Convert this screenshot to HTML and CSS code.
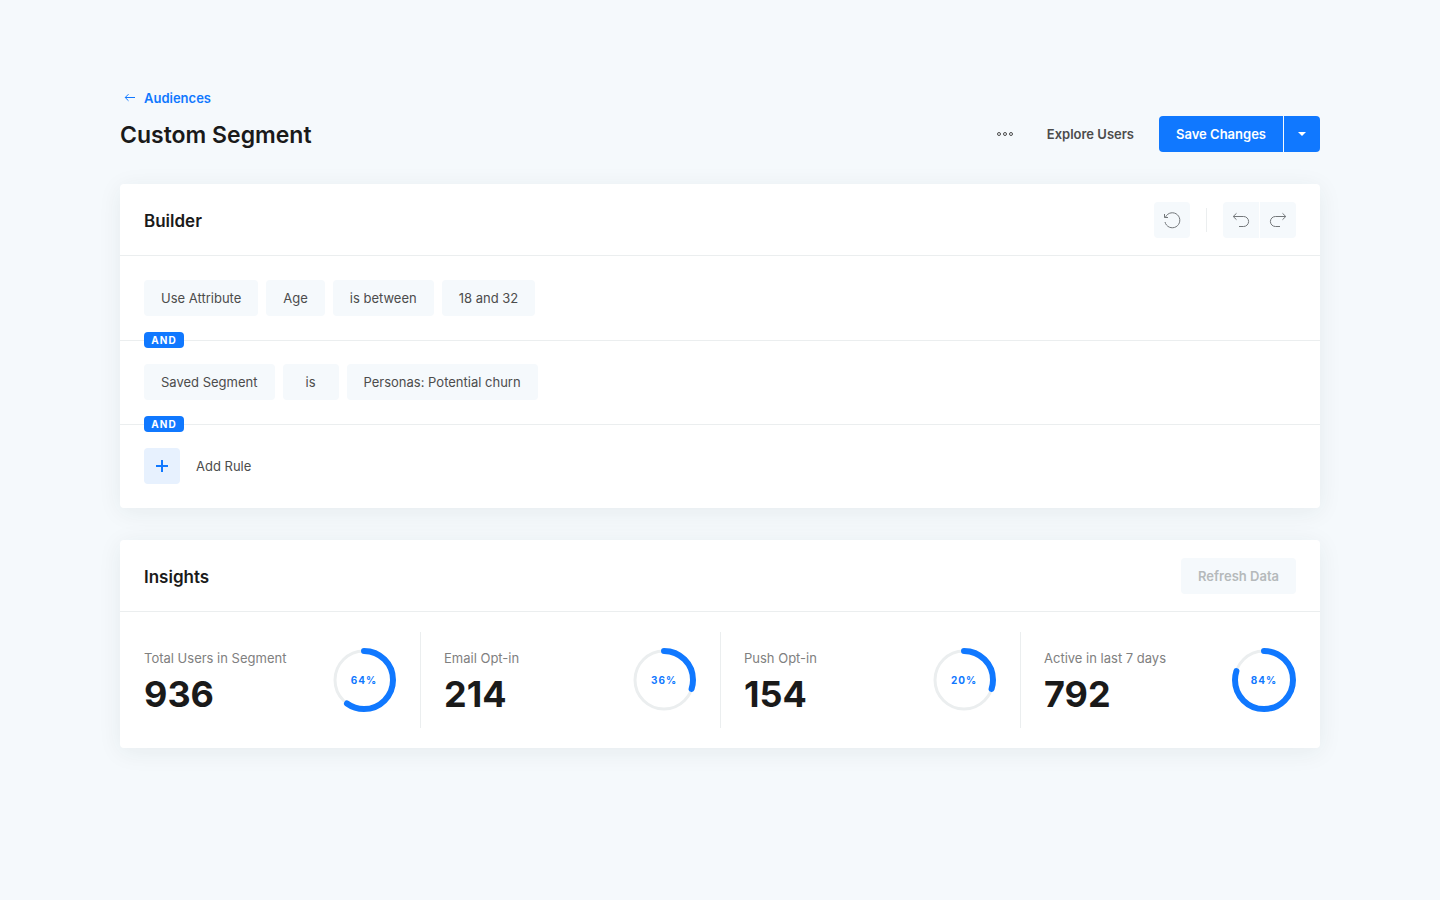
FILE: index.html
```html
<!DOCTYPE html>
<html lang="en">
<head>
    <meta charset="UTF-8">
    <meta name="viewport" content="width=device-width, initial-scale=1.0">
    <title>Custom Segment</title>
    <link rel="stylesheet" href="styles.css">
</head>
<body>
    <div class="page">
        <header>
            <a class="back-link" href="#">
                <svg width="12" height="10" viewBox="0 0 12 10"><path d="M11 4.5H1.2M4.5 1.2L1.2 4.5l3.3 3.3"/></svg>
                Audiences
            </a>
            <div class="title-row">
                <h1>Custom Segment</h1>
                <div class="actions">
                    <button class="more-btn" aria-label="More">
                        <svg width="18" height="6" viewBox="0 0 18 6">
                            <circle cx="3" cy="3" r="1.5"/>
                            <circle cx="9" cy="3" r="1.5"/>
                            <circle cx="15" cy="3" r="1.5"/>
                        </svg>
                    </button>
                    <button class="text-btn">Explore Users</button>
                    <div class="split-btn">
                        <button class="save-btn">Save Changes</button>
                        <button class="caret-btn" aria-label="More save options">
                            <svg width="8" height="4" viewBox="0 0 8 4"><path d="M0 0h8L4 4z"/></svg>
                        </button>
                    </div>
                </div>
            </div>
        </header>

        <main>
            <section class="card">
                <div class="card-head">
                    <h2>Builder</h2>
                    <div class="tools">
                        <button class="tool-btn" aria-label="Reset">
                            <svg width="20" height="20" viewBox="0 0 20 20"><path d="M3 12a7.5 7.5 0 1 0 .6-5.1L3 7.5M2.5 4v3.5H6"/></svg>
                        </button>
                        <span class="tool-line"></span>
                        <div class="tool-group">
                            <button class="tool-btn" aria-label="Undo">
                                <svg width="20" height="20" viewBox="0 0 20 20"><path d="M5.5 3.3L2.2 6.5l3.3 3.2M2.4 6.5h10.2a5 5 0 0 1 0 10H8"/></svg>
                            </button>
                            <button class="tool-btn" aria-label="Redo">
                                <svg width="20" height="20" viewBox="0 0 20 20"><path d="M14.5 3.3l3.3 3.2-3.3 3.2M17.6 6.5H7.4a5 5 0 0 0 0 10H12"/></svg>
                            </button>
                        </div>
                    </div>
                </div>
                <div class="rule">
                    <button class="tag">Use Attribute</button>
                    <button class="tag">Age</button>
                    <button class="tag">is between</button>
                    <button class="tag">18 and 32</button>
                </div>
                <div class="rule">
                    <span class="badge">AND</span>
                    <button class="tag">Saved Segment</button>
                    <button class="tag">is</button>
                    <button class="tag">Personas: Potential churn</button>
                </div>
                <div class="rule">
                    <span class="badge">AND</span>
                    <button class="add-btn">
                        <span class="add-icon">
                            <svg width="12" height="12" viewBox="0 0 12 12"><path d="M6 0v12M0 6h12"/></svg>
                        </span>
                        Add Rule
                    </button>
                </div>
            </section>

            <section class="card">
                <div class="card-head">
                    <h2>Insights</h2>
                    <button class="refresh-btn" disabled>Refresh Data</button>
                </div>
                <div class="stats">
                    <div class="stat">
                        <div class="stat-text">
                            <div class="stat-label">Total Users in Segment</div>
                            <div class="stat-value">936</div>
                        </div>
                        <div class="ring">
                            <svg width="64" height="64" viewBox="0 0 64 64">
                                <circle class="track" cx="32" cy="32" r="29"/>
                                <circle class="bar" cx="32" cy="32" r="29" pathLength="100" stroke-dasharray="60 100"/>
                            </svg>
                            <span>64%</span>
                        </div>
                    </div>
                    <div class="stat">
                        <div class="stat-text">
                            <div class="stat-label">Email Opt-in</div>
                            <div class="stat-value">214</div>
                        </div>
                        <div class="ring">
                            <svg width="64" height="64" viewBox="0 0 64 64">
                                <circle class="track" cx="32" cy="32" r="29"/>
                                <circle class="bar" cx="32" cy="32" r="29" pathLength="100" stroke-dasharray="30 100"/>
                            </svg>
                            <span>36%</span>
                        </div>
                    </div>
                    <div class="stat">
                        <div class="stat-text">
                            <div class="stat-label">Push Opt-in</div>
                            <div class="stat-value">154</div>
                        </div>
                        <div class="ring">
                            <svg width="64" height="64" viewBox="0 0 64 64">
                                <circle class="track" cx="32" cy="32" r="29"/>
                                <circle class="bar" cx="32" cy="32" r="29" pathLength="100" stroke-dasharray="30 100"/>
                            </svg>
                            <span>20%</span>
                        </div>
                    </div>
                    <div class="stat">
                        <div class="stat-text">
                            <div class="stat-label">Active in last 7 days</div>
                            <div class="stat-value">792</div>
                        </div>
                        <div class="ring">
                            <svg width="64" height="64" viewBox="0 0 64 64">
                                <circle class="track" cx="32" cy="32" r="29"/>
                                <circle class="bar" cx="32" cy="32" r="29" pathLength="100" stroke-dasharray="80 100"/>
                            </svg>
                            <span>84%</span>
                        </div>
                    </div>
                </div>
            </section>
        </main>
    </div>
</body>
</html>
```

FILE: styles.css
```css
* {
    box-sizing: border-box;
}
body {
    margin: 0;
    background-color: #f5f9fc;
    color: #1a1a1a;
    font-family: Inter, "Liberation Sans", sans-serif;
    font-size: 13px;
    line-height: 20px;
}
h1, h2 {
    margin: 0;
    padding-top: 2px;
    font-weight: 600;
}
h1 {
    font-size: 23px;
    line-height: 34px;
}
h2 {
    font-size: 17px;
    line-height: 24px;
}
button {
    height: 36px;
    padding: 0 17px;
    border: none;
    border-radius: 4px;
    background-color: #f5f9fc;
    color: #4c4c4c;
    font: inherit;
    cursor: pointer;
}
svg {
    display: block;
    fill: none;
    stroke: currentColor;
}
.page {
    padding: 88px 120px;
}
.back-link {
    display: flex;
    align-items: center;
    gap: 8px;
    width: fit-content;
    padding-left: 4px;
    color: #1078ff;
    font-weight: 600;
    text-decoration: none;
}
.title-row {
    display: flex;
    justify-content: space-between;
    align-items: center;
    margin-top: 8px;
}
.actions {
    display: flex;
    align-items: center;
    gap: 8px;
}
.more-btn {
    padding: 0 8px;
}
.more-btn, .text-btn {
    background-color: transparent;
    font-weight: 600;
}
.split-btn {
    display: flex;
    gap: 1px;
}
.save-btn, .caret-btn {
    background-color: #1078ff;
    color: #fff;
    font-weight: 600;
}
.save-btn {
    border-radius: 4px 0 0 4px;
}
.caret-btn {
    width: 36px;
    padding: 0 14px;
    border-radius: 0 4px 4px 0;
}
.caret-btn svg {
    fill: #fff;
    stroke: none;
}
.card {
    margin-top: 32px;
    border-radius: 4px;
    background-color: #fff;
    box-shadow: 0 4px 24px rgba(30, 50, 60, 0.07);
}
.card-head {
    display: flex;
    justify-content: space-between;
    align-items: center;
    height: 72px;
    padding: 0 24px;
    border-bottom: 1px solid #ebeeef;
}
.tools, .tool-group {
    display: flex;
    align-items: center;
}
.tool-group {
    gap: 1px;
}
.tool-btn {
    width: 36px;
    padding: 0 8px;
    color: #73777a;
}
.tool-group .tool-btn:first-child {
    border-radius: 4px 0 0 4px;
}
.tool-group .tool-btn:last-child {
    border-radius: 0 4px 4px 0;
}
.tool-line {
    width: 1px;
    height: 24px;
    margin: 0 16px;
    background-color: #ebeeef;
}
.rule {
    display: flex;
    flex-wrap: wrap;
    gap: 8px;
    padding: 24px;
    position: relative;
}
.rule + .rule {
    padding-top: 23px;
    border-top: 1px solid #ebeeef;
}
.tag {
    min-width: 56px;
}
/* sits on the line between two rules */
.badge {
    position: absolute;
    top: -9px;
    left: 24px;
    width: 40px;
    border-radius: 4px;
    background-color: #1078ff;
    color: #fff;
    font-size: 10px;
    font-weight: 700;
    line-height: 16px;
    letter-spacing: 1px;
    text-align: center;
}
.add-btn {
    display: flex;
    align-items: center;
    gap: 16px;
    padding: 0;
    background-color: transparent;
}
.add-icon {
    padding: 12px;
    border-radius: 4px;
    background-color: #e7f1fe;
    color: #1078ff;
}
.add-icon svg {
    stroke-width: 2;
}
.refresh-btn {
    color: #b5b9bb;
    font-weight: 600;
    cursor: default;
}
.stats {
    display: grid;
    grid-template-columns: repeat(4, 1fr);
    padding: 20px 0;
}
.stat {
    display: flex;
    justify-content: space-between;
    align-items: center;
    height: 96px;
    padding: 0 24px;
}
.stat + .stat {
    border-left: 1px solid #ebeeef;
    padding-left: 23px;
}
.stat-text {
    padding-top: 4px;
}
.stat-label {
    color: #808080;
}
.stat-value {
    margin-top: 4px;
    font-size: 36px;
    font-weight: 700;
    line-height: 44px;
}
.ring {
    position: relative;
}
.ring svg {
    transform: rotate(-90deg);
}
.track {
    stroke: #ebeeef;
    stroke-width: 3;
}
.bar {
    stroke: #1078ff;
    stroke-width: 6;
    stroke-linecap: round;
}
.ring span {
    position: absolute;
    top: 22px;
    left: 0;
    width: 64px;
    color: #1078ff;
    font-size: 10px;
    font-weight: 700;
    letter-spacing: 1px;
    text-align: center;
}
```
